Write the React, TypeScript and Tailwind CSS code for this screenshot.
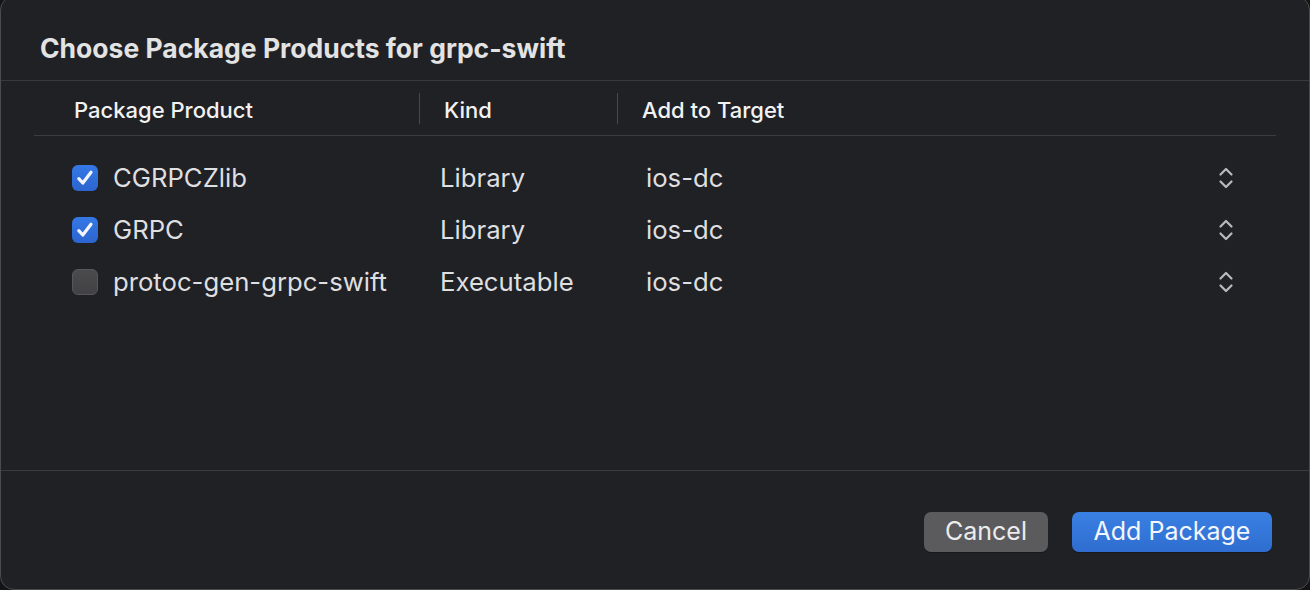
import React from 'react';

const rows = [
  { name: 'CGRPCZlib', kind: 'Library', target: 'ios-dc', checked: true },
  { name: 'GRPC', kind: 'Library', target: 'ios-dc', checked: true },
  { name: 'protoc-gen-grpc-swift', kind: 'Executable', target: 'ios-dc', checked: false },
];

function Checkbox({ checked }: { checked: boolean }) {
  if (!checked) {
    return <div className="h-[26px] w-[26px] shrink-0 rounded-[6px] border border-[#56575a] bg-gradient-to-b from-[#4b4b4e] to-[#424245]" />;
  }
  return (
    <div className="flex h-[26px] w-[26px] shrink-0 items-center justify-center rounded-[6px] bg-gradient-to-b from-[#3478e6] to-[#2c65cf]">
      <svg width="20" height="20" viewBox="0 0 20 20" fill="none">
        <path d="M3.8 10.6 L7.8 15 L16 4.2" stroke="#f4f6fb" strokeWidth="3.2" strokeLinecap="round" strokeLinejoin="round" />
      </svg>
    </div>
  );
}

function Stepper() {
  return (
    <svg width="16" height="24" viewBox="0 0 16 24" fill="none">
      <path d="M2.5 8.5 L8 3 L13.5 8.5" stroke="#b9babc" strokeWidth="2.2" strokeLinecap="round" strokeLinejoin="round" />
      <path d="M2.5 15.5 L8 21 L13.5 15.5" stroke="#b9babc" strokeWidth="2.2" strokeLinecap="round" strokeLinejoin="round" />
    </svg>
  );
}

export default function App() {
  return (
    <div className="h-[590px] w-[1310px] overflow-hidden bg-[#141416]" style={{ fontFamily: 'Inter, "Noto Sans", sans-serif' }}>
      <div className="-mt-[4px] flex h-[594px] flex-col rounded-[14px] border border-[#4a4b4e] bg-[#202125]">
        {/* Title */}
        <div className="flex h-[84px] items-center border-b border-[#38393c] px-[39px] pt-[20px]">
          <h1 className="text-[26.5px] font-bold leading-none text-[#e3e3e4]">Choose Package Products for grpc-swift</h1>
        </div>

        {/* Table header */}
        <div className="mx-[33px] flex h-[55px] items-center border-b border-[#3b3c3f] pt-[4px] text-[22px] font-medium text-[#f2f2f3]">
          <div className="w-[385px] pl-[40px]">Package Product</div>
          <div className="-mt-[4px] h-[31px] w-px bg-[#48494c]" />
          <div className="w-[197px] pl-[24px]">Kind</div>
          <div className="-mt-[4px] h-[31px] w-px bg-[#48494c]" />
          <div className="pl-[24px]">Add to Target</div>
        </div>

        {/* Rows */}
        <div className="mx-[33px] flex-1 pt-[16px] text-[25.7px] text-[#dfdfe0]">
          {rows.map((r) => (
            <div key={r.name} className="flex h-[52px] items-center">
              <div className="flex w-[406px] items-center gap-[15px] pl-[38px]">
                <Checkbox checked={r.checked} />
                <span>{r.name}</span>
              </div>
              <div className="w-[206px]">{r.kind}</div>
              <div className="flex flex-1 items-center justify-between pr-[42px]">
                <span>{r.target}</span>
                <Stepper />
              </div>
            </div>
          ))}
        </div>

        {/* Footer */}
        <div className="flex h-[119px] items-start justify-end gap-[24px] border-t border-[#3a3b3e] pr-[37px] pt-[41px]">
          <button className="h-[40px] w-[124px] rounded-[7px] bg-[#5b5b5e] text-[25px] text-[#ececed] shadow-[0_1px_1px_rgba(0,0,0,0.3)]">
            Cancel
          </button>
          <button className="h-[40px] w-[200px] rounded-[7px] bg-gradient-to-b from-[#3a80e3] to-[#2f6dd0] text-[25px] text-[#f3f6fc] shadow-[0_1px_1px_rgba(0,0,0,0.3)]">
            Add Package
          </button>
        </div>
      </div>
    </div>
  );
}
